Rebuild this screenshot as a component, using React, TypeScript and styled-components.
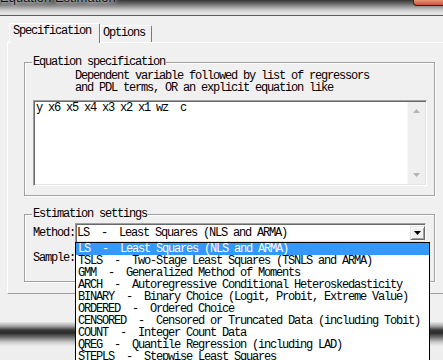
import React from 'react';
import styled, { createGlobalStyle } from 'styled-components';

const Global = createGlobalStyle`
  html, body { margin: 0; padding: 0; }
  body { width: 443px; height: 360px; overflow: hidden; background: #ececec; }
`;

const mono = `
  font-family: "Liberation Mono", "Courier New", monospace;
  font-size: 12px;
  line-height: 12px;
  letter-spacing: -1.2px;
  color: #000;
  white-space: pre;
`;

const Screen = styled.div`
  width: 443px;
  height: 360px;
  overflow: hidden;
  display: flex;
  flex-direction: column;
  background: #eeeeee;
`;

const Window = styled.div`
  width: 443px;
  display: flex;
  flex-direction: column;
`;

const TitleBar = styled.div`
  height: 15px;
  border-bottom: 1px solid #5c5c5c;
  background: linear-gradient(to bottom, #353535 0px, #6d6d6d 4px, #bdbdbd 9px, #dedede 12px, #e6e6e6 15px);
  display: flex;
  align-items: flex-start;
  overflow: hidden;
`;

const TitleText = styled.span`
  font-family: "Liberation Sans", Arial, sans-serif;
  font-size: 13px;
  line-height: 13px;
  margin-top: -9px;
  color: #111;
  text-shadow: 0 0 6px #fff, 0 0 3px #fff;
`;

const CloseButton = styled.div`
  margin-left: auto;
  width: 29px;
  height: 5px;
  border-left: 1px solid #3a2018;
  border-bottom: 1px solid #3a2018;
  border-bottom-left-radius: 4px;
  background: linear-gradient(to bottom, #e6957a, #c8553a);
`;

const Body = styled.div`
  background: #f0f0f0;
  height: 306px;
  padding: 7px 0 0 7px;
  box-sizing: border-box;
  display: flex;
  flex-direction: column;
`;

const TabStrip = styled.div`
  display: flex;
  align-items: flex-end;
  height: 19px;
  padding-left: 2px;
  position: relative;
  z-index: 1;
`;

const Tab = styled.div<{ $active?: boolean }>`
  ${mono}
  box-sizing: border-box;
  width: ${(p) => (p.$active ? 91 : 52)}px;
  height: ${(p) => (p.$active ? 20 : 17)}px;
  margin-bottom: ${(p) => (p.$active ? -1 : 0)}px;
  padding: 1px 0 0 ${(p) => (p.$active ? 3 : 2)}px;
  border-top: 1px solid #ffffff;
  border-left: 1px solid #ffffff;
  border-right: 1px solid #7a7a7a;
  border-radius: 2px 2px 0 0;
  background: #f0f0f0;
`;

const TabPanel = styled.div`
  width: 450px;
  box-sizing: border-box;
  border-top: 1px solid #ffffff;
  border-left: 1px solid #ffffff;
  border-bottom: 1px solid #a0a0a0;
  border-right: 1px solid #a0a0a0;
  padding: 13px 0 11px 16px;
  display: flex;
  flex-direction: column;
`;

const Group = styled.fieldset<{ $top: number; $bottom: number }>`
  margin: ${(p) => p.$top}px 0 0 0;
  padding: 0 8px ${(p) => p.$bottom}px 8px;
  width: 411px;
  min-width: 0;
  box-sizing: border-box;
  border: 1px solid #a0a0a0;
  box-shadow: 1px 1px 0 #ffffff, inset 1px 1px 0 #ffffff;
`;

const Legend = styled.legend`
  ${mono}
  padding: 0 1px;
  margin-left: -1px;
  background: #f0f0f0;
`;

const Hint = styled.div`
  ${mono}
  margin-top: 2px;
  padding-left: 42px;
`;

const EditBox = styled.div`
  margin-top: 6px;
  width: 394px;
  height: 86px;
  box-sizing: border-box;
  border: 1px solid;
  border-color: #a0a0a0 #ffffff #ffffff #a0a0a0;
  box-shadow: inset 1px 1px 0 #696969, inset -1px -1px 0 #e3e3e3;
  padding: 1px;
  background: #ffffff;
  display: flex;
`;

const EditText = styled.div`
  ${mono}
  flex: 1;
  padding-left: 1px;
`;

const ScrollBar = styled.div`
  width: 17px;
  background: #efefef;
  border-left: 1px solid #f7f7f7;
  display: flex;
  flex-direction: column;
  justify-content: space-between;
  align-items: center;
  padding: 7px 0 7px;
`;

const Arrow = styled.svg`
  display: block;
`;

const FieldRow = styled.div<{ $top: number }>`
  display: flex;
  align-items: center;
  margin-top: ${(p) => p.$top}px;
`;

const Label = styled.span`
  ${mono}
  width: 42px;
`;

const Combo = styled.div`
  position: relative;
  width: 352px;
  height: 20px;
  box-sizing: border-box;
  border: 1px solid;
  border-color: #a0a0a0 #ffffff #ffffff #a0a0a0;
  box-shadow: inset 1px 1px 0 #696969, inset -1px -1px 0 #e3e3e3;
  background: #ffffff;
  padding: 1px 0 1px 1px;
  display: flex;
  align-items: center;
`;

const ComboText = styled.span`
  ${mono}
  flex: 1;
`;

const DropButton = styled.div`
  width: 15px;
  height: 14px;
  box-sizing: border-box;
  border: 1px solid;
  border-color: #e3e3e3 #696969 #696969 #e3e3e3;
  box-shadow: inset 1px 1px 0 #ffffff, inset -1px -1px 0 #a0a0a0;
  background: #f0f0f0;
  display: flex;
  align-items: center;
  justify-content: center;
`;

const DropList = styled.div`
  position: absolute;
  top: 100%;
  left: -1px;
  width: 355px;
  box-sizing: border-box;
  border: 1px solid #000000;
  background: #ffffff;
  z-index: 5;
`;

const Item = styled.div<{ $selected?: boolean }>`
  ${mono}
  height: 12px;
  padding-left: 2px;
  background: ${(p) => (p.$selected ? '#3399ff' : '#ffffff')};
  color: ${(p) => (p.$selected ? '#ffffff' : '#000000')};
`;

const FrameBottom = styled.div`
  height: 24px;
  background: linear-gradient(
    to bottom,
    #e8e8e8 0px,
    #a8a8a8 4px,
    #3a3a3a 8px,
    #2a2a2a 11px,
    #6a6a6a 15px,
    #c8c8c8 20px,
    #ececec 24px
  );
`;

const methods = [
  'LS  -  Least Squares (NLS and ARMA)',
  'TSLS  -  Two-Stage Least Squares (TSNLS and ARMA)',
  'GMM  -  Generalized Method of Moments',
  'ARCH  -  Autoregressive Conditional Heteroskedasticity',
  'BINARY  -  Binary Choice (Logit, Probit, Extreme Value)',
  'ORDERED  -  Ordered Choice',
  'CENSORED  -  Censored or Truncated Data (including Tobit)',
  'COUNT  -  Integer Count Data',
  'QREG  -  Quantile Regression (including LAD)',
  'STEPLS  -  Stepwise Least Squares',
];

export default function App() {
  return (
    <>
      <Global />
      <Screen>
        <Window>
          <TitleBar>
            <TitleText>Equation Estimation</TitleText>
            <CloseButton />
          </TitleBar>
          <Body>
            <TabStrip>
              <Tab $active>Specification</Tab>
              <Tab>Options</Tab>
            </TabStrip>
            <TabPanel>
              <Group $top={0} $bottom={9}>
                <Legend>Equation specification</Legend>
                <Hint>
                  {'Dependent variable followed by list of regressors\nand PDL terms, OR an explicit equation like'}
                </Hint>
                <EditBox>
                  <EditText>y x6 x5 x4 x3 x2 x1 wz  c</EditText>
                  <ScrollBar>
                    <Arrow width="7" height="4" viewBox="0 0 7 4">
                      <path d="M0 4 L3.5 0 L7 4 Z" fill="#b4b4b4" />
                    </Arrow>
                    <Arrow width="7" height="4" viewBox="0 0 7 4">
                      <path d="M0 0 L3.5 4 L7 0 Z" fill="#b4b4b4" />
                    </Arrow>
                  </ScrollBar>
                </EditBox>
              </Group>
              <Group $top={12} $bottom={17}>
                <Legend>Estimation settings</Legend>
                <FieldRow $top={3}>
                  <Label>Method:</Label>
                  <Combo>
                    <ComboText>{methods[0]}</ComboText>
                    <DropButton>
                      <Arrow width="7" height="4" viewBox="0 0 7 4">
                        <path d="M0 0 L3.5 4 L7 0 Z" fill="#000" />
                      </Arrow>
                    </DropButton>
                    <DropList>
                      {methods.map((m, i) => (
                        <Item key={m} $selected={i === 0}>
                          {m}
                        </Item>
                      ))}
                    </DropList>
                  </Combo>
                </FieldRow>
                <FieldRow $top={9}>
                  <Label>Sample:</Label>
                </FieldRow>
              </Group>
            </TabPanel>
          </Body>
          <FrameBottom />
        </Window>
      </Screen>
    </>
  );
}
